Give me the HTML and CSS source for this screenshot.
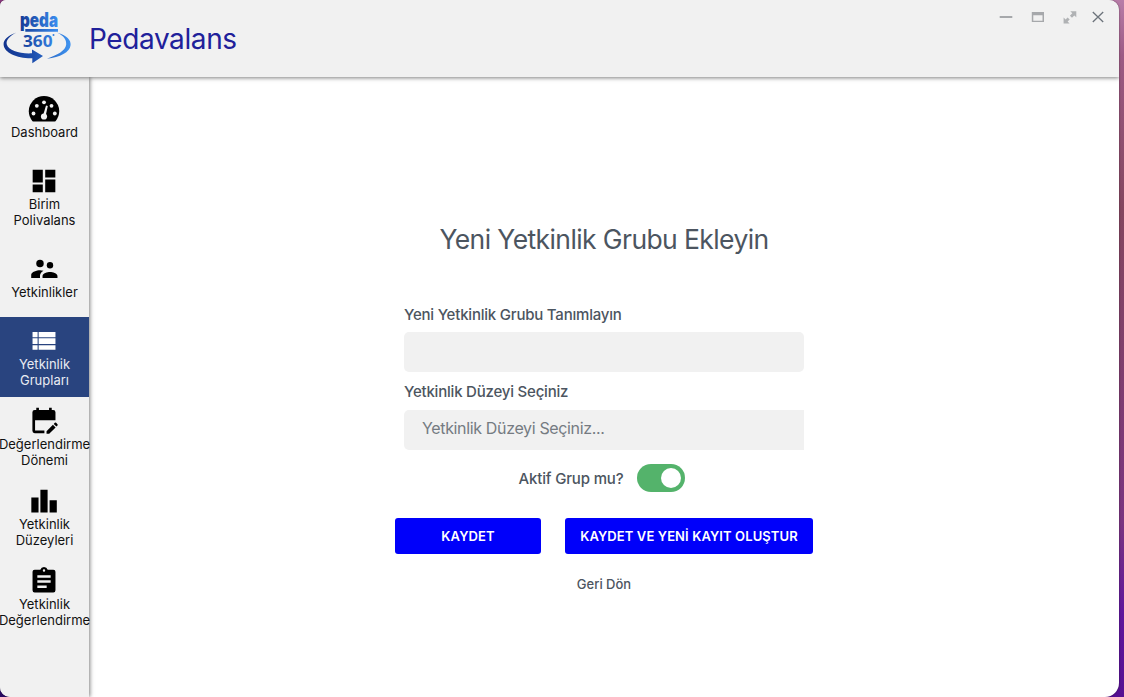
FILE: index.html
```html
<!DOCTYPE html>
<html lang="tr">
<head>
<meta charset="utf-8">
<title>Pedavalans</title>
<link rel="stylesheet" href="styles.css">
</head>
<body>
<div class="window">
  <header class="header">
    <svg class="logo" width="72" height="66" viewBox="0 -10 72 66" role="img" aria-label="Peda 360">
      <defs>
        <linearGradient id="blue" gradientUnits="userSpaceOnUse" x1="4" y1="0" x2="70" y2="0"><stop offset="0" stop-color="#12348e"/><stop offset=".45" stop-color="#1d4fae"/><stop offset="1" stop-color="#4094f0"/></linearGradient>
        <linearGradient id="word" gradientUnits="userSpaceOnUse" x1="20" y1="0" x2="58" y2="0"><stop offset="0" stop-color="#153b96"/><stop offset="1" stop-color="#3a8df0"/></linearGradient>
      </defs>
      <text class="logo-word" transform="translate(0 16.800) scale(1 1.100)" x="20" y="0" textLength="38" lengthAdjust="spacingAndGlyphs" fill="url(#word)">peda</text>
      <path d="M25.300 19H58V21.800H25.300z" fill="url(#word)"/>
      <text class="logo-number" x="23" y="37" textLength="29.500" lengthAdjust="spacingAndGlyphs" fill="url(#word)">360</text>
      <circle cx="53.500" cy="25" r="1" fill="#3481df"/>
      <path fill="url(#blue)" d="M16.500 22.500C7.500 25.500 3.300 30 3.600 34.500c.400 8.500 14 14.200 28.700 13.800V53.300L43 46 32 39.500V43.300C20 44 8.500 40.500 6.800 34.500 5.700 30 9.500 26 16.500 22.500z"/>
      <path fill="url(#blue)" d="M57 22.500C67 25.500 71 30 70.600 35 70 42.500 60 47.200 47 48.700 57 45 65.500 41 66.200 34.500 66.500 29.500 64 26 57 22.500z"/>
    </svg>
    <h1 class="brand">Pedavalans</h1>
    <div class="controls">
      <svg width="16" height="16" viewBox="0 0 16 16"><path d="M1.700 8H14.300" stroke="#a6a8ab" stroke-width="2"/></svg>
      <svg width="16" height="16" viewBox="0 0 16 16"><path fill="#a6a8ab" fill-rule="evenodd" d="M1.800 3H14V13H1.800zM3.300 6.200V11.700H12.500V6.200z"/></svg>
      <svg width="16" height="16" viewBox="0 0 16 16"><path fill="#b0b2b4" d="M8.300 2.300H14.300V8.300L12.300 6.400 10 8.800 7.900 6.700 10.300 4.300zM7.600 14.600H1.600V8.600L3.600 10.500 5.600 8.500 7.700 10.600 5.600 12.600z"/></svg>
      <svg class="close" width="16" height="16" viewBox="0 0 16 16"><path d="M2.800 3L13.200 13M13.200 3L2.800 13" stroke="#6d747c" stroke-width="1.300"/></svg>
    </div>
  </header>
  <div class="body">
    <nav class="sidebar">
      <a class="item first"><svg width="32" height="32" viewBox="0 0 32 32"><path d="M4.500 27.200A15.200 15.200 0 1 1 27.500 27.200Q26.800 27.500 26 27.500H6Q5.200 27.500 4.500 27.200z"/><g fill="#f1f1f1"><circle cx="5.500" cy="19.500" r="1.900"/><circle cx="8.800" cy="11.800" r="1.900"/><circle cx="16" cy="8.300" r="1.900"/><circle cx="23.500" cy="11.800" r="1.900"/><circle cx="26.800" cy="19.500" r="1.900"/><circle cx="16" cy="22.500" r="3.100"/><path d="M15.200 21L18 11.500 19.800 12 17.600 22z"/></g></svg><span>Dashboard</span></a>
      <a class="item second"><svg width="32" height="32" viewBox="0 0 24 24"><path d="M3.500 3.500h7.600v9.600H3.500zM12.900 3.500h7.600v5.800h-7.600zM3.500 14.700h7.600v5.800H3.500zM12.900 10.900h7.600v9.600h-7.600z"/></svg><span>Birim<br>Polivalans</span></a>
      <a class="item third"><svg width="32" height="32" viewBox="0 0 24 24"><circle cx="9" cy="7.800" r="2.800"/><circle cx="16.500" cy="9.200" r="2.400"/><path d="M16.500 14.200c-1.900 0-5.600 1-5.600 3v1.500h11.200v-1.500c0-2-3.700-3-5.600-3zM9 12.900c-2.300 0-6.600 1.200-6.600 3.500v2.300H9v-1.500c0-.9.400-2.500 2.600-3.800-.9-.3-1.900-.5-2.600-.5z"/></svg><span>Yetkinlikler</span></a>
      <a class="item active"><svg width="32" height="32" viewBox="0 0 24 24"><path d="M3.400 5.200h3.800v3.900H3.400zM8 5.200h12.600v3.900H8zM3.400 10h3.800v4.200H3.400zM8 10h12.600v4.200H8zM3.400 15.100h3.800v3.500H3.400zM8 15.100h12.600v3.500H8z"/></svg><span>Yetkinlik<br>Grupları</span></a>
      <a class="item"><svg width="32" height="32" viewBox="0 0 24 24"><path fill-rule="evenodd" d="M6.200 2h2v1.800h7.600V2h2v1.800h1.100q1.700 0 1.700 1.700v6H5.300v7.600h7v2H5q-1.700 0-1.700-1.700V5.500q0-1.700 1.700-1.700h1.200z"/><path d="M13.900 19.600l4.800-4.800 2 2-4.800 4.800h-2zM19.300 14.200l.8-.8q.5-.5 1 0l1 1q.5.500 0 1l-.8.800z"/></svg><span>Değerlendirme<br>Dönemi</span></a>
      <a class="item"><svg width="32" height="32" viewBox="0 0 24 24"><path d="M2.500 9.400h5.400v11.200H2.500zM9.300 3.500h5.400v17.100H9.300zM16.200 11.500h5.400v9.100h-5.400z"/></svg><span>Yetkinlik<br>Düzeyleri</span></a>
      <a class="item"><svg width="32" height="32" viewBox="0 0 24 24"><path fill-rule="evenodd" d="M5 3.500h4.200a3 3 0 0 1 5.600 0H19q1.600 0 1.600 1.600V19q0 1.700-1.600 1.700H5q-1.600 0-1.600-1.700V5.100q0-1.600 1.600-1.600zM12 3.200a.9.900 0 1 0 0 1.800.9.900 0 1 0 0-1.800zM7 7.600v1.900h10V7.600zM7 11.500v1.900h10v-1.900zM7 15.300v1.900h7v-1.900z"/></svg><span>Yetkinlik<br>Değerlendirme</span></a>
    </nav>
    <main class="content">
      <form class="form">
        <h2 class="title">Yeni Yetkinlik Grubu Ekleyin</h2>
        <label class="label" for="group">Yeni Yetkinlik Grubu Tanımlayın</label>
        <input class="field" id="group" type="text">
        <span class="label label-second">Yetkinlik Düzeyi Seçiniz</span>
        <div class="field select">Yetkinlik Düzeyi Seçiniz...</div>
        <div class="toggle-row"><span class="toggle-label">Aktif Grup mu?</span><span class="toggle"><span class="knob"></span></span></div>
        <div class="buttons"><button class="button save" type="button">KAYDET</button><button class="button save-new" type="button">KAYDET VE YENİ KAYIT OLUŞTUR</button></div>
        <a class="back">Geri Dön</a>
      </form>
    </main>
  </div>
</div>
</body>
</html>
```
FILE: styles.css
```css
* { box-sizing: border-box; }
body {
  margin: 0;
  height: 697px;
  overflow: hidden;
  font-family: Inter, "Liberation Sans", sans-serif;
  background:
    linear-gradient(#8c3a80, #2a0a63 10%) 0 0 / 50% 100% no-repeat,
    linear-gradient(#b87ca8 0, #9c5a84 8%, #84465f 30%, #80406c 50%, #7a3480 75%, #5f179c 88%, #561092 100%);
}
.window {
  width: 1119px;
  height: 697px;
  display: flex;
  flex-direction: column;
  overflow: hidden;
  background: #fff;
  border-radius: 6px 10px 14px 10px;
  box-shadow: 0 0 2px rgba(0, 0, 0, .5);
}
.header {
  height: 77px;
  flex: none;
  display: flex;
  align-items: flex-start;
  background: #f1f1f1;
  box-shadow: 0 1px 4px rgba(0, 0, 0, .5);
  z-index: 2;
}
.logo { display: block; flex: none; overflow: visible; }
.logo-word { font: 900 18px Inter, sans-serif; }
.logo-number { font: 700 16.500px "Open Sans", sans-serif; }
.brand {
  margin: 21px 0 0 17px;
  font-size: 28px;
  line-height: 36px;
  font-weight: 400;
  letter-spacing: -.4px;
  color: #20209a;
}
.controls { display: flex; gap: 16px; margin: 9px 13px 0 auto; }
.controls svg { display: block; }
.controls .close { margin-left: -4px; }
.body { flex: 1; display: flex; min-height: 0; }
.sidebar {
  width: 89px;
  flex: none;
  background: #f1f1f1;
  box-shadow: 1px 0 4px rgba(0, 0, 0, .5);
  z-index: 1;
}
.item {
  height: 80px;
  padding-top: 8px;
  display: flex;
  flex-direction: column;
  align-items: center;
  color: #111;
  font-size: 13px;
  line-height: 16px;
  text-align: center;
  white-space: nowrap;
}
.item svg { display: block; flex: none; fill: #000; margin: 0 1px -1px 0; }
.first { height: 72px; padding-top: 17px; }
.first svg { margin-bottom: -2px; }
.second { height: 88px; padding-top: 16px; }
.third { padding-top: 16px; }
.active { background: #29447f; color: #e8ebf2; }
.active svg { fill: #fff; }
.content { flex: 1; display: flex; justify-content: center; color: #4c5560; }
.form { width: 420px; display: flex; flex-direction: column; align-items: center; }
.title { margin: 144px 0 0; font-size: 26.500px; line-height: 36px; font-weight: 400; letter-spacing: -.6px; white-space: nowrap; }
.label { width: 400px; margin-top: 47px; font-size: 15px; line-height: 22px; font-weight: 500; letter-spacing: -.21px; }
.field {
  width: 400px;
  height: 40px;
  margin-top: 6px;
  padding: 0 18px;
  border: 0;
  border-radius: 5px;
  background: #f1f1f1;
}
.label-second { margin-top: 9px; }
.select { margin-top: 7px; border-radius: 5px 0 0 5px; font-size: 16px; line-height: 36px; letter-spacing: -.35px; color: #757b82; }
.toggle-row { display: flex; align-items: center; gap: 14px; margin: 14px 0 0 -4px; }
.toggle-label { font-size: 15px; font-weight: 500; letter-spacing: -.16px; }
.toggle { width: 48px; height: 28px; padding: 4px; border-radius: 14px; background: #54b36b; display: flex; justify-content: flex-end; }
.knob { width: 20px; height: 20px; border-radius: 50%; background: #fff; }
.buttons { display: flex; gap: 24px; margin-top: 26px; }
.button {
  height: 36px;
  padding: 0;
  border: 0;
  border-radius: 3px;
  background: #0000fa;
  color: #fff;
  font: 600 13px Inter, sans-serif;
  letter-spacing: .1px;
  white-space: nowrap;
}
.save { width: 146px; }
.save-new { width: 248px; }
.back { margin-top: 22px; font-size: 13px; line-height: 16px; font-weight: 500; }
```
